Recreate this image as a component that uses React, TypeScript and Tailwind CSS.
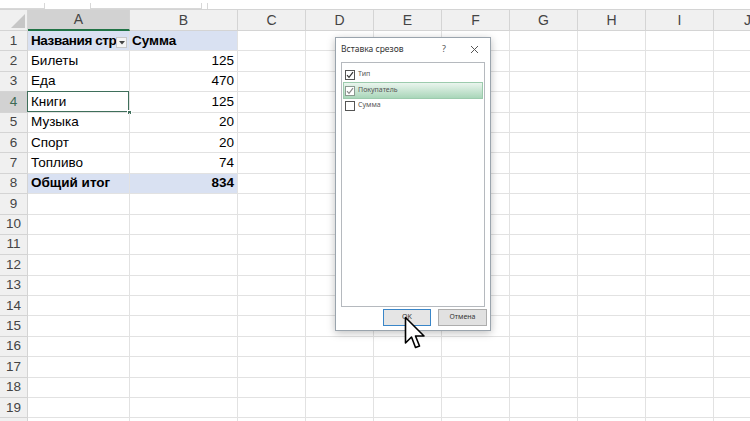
import React from "react";

const cols = [
  { l: "A", w: 102 },
  { l: "B", w: 108 },
  { l: "C", w: 68 },
  { l: "D", w: 68 },
  { l: "E", w: 68 },
  { l: "F", w: 68 },
  { l: "G", w: 68 },
  { l: "H", w: 68 },
  { l: "I", w: 68 },
  { l: "J", w: 68 },
];

type Row = { a?: string; b?: string; head?: boolean; total?: boolean };

const rows: Row[] = [
  { a: "Названия стр", b: "Сумма", head: true },
  { a: "Билеты", b: "125" },
  { a: "Еда", b: "470" },
  { a: "Книги", b: "125" },
  { a: "Музыка", b: "20" },
  { a: "Спорт", b: "20" },
  { a: "Топливо", b: "74" },
  { a: "Общий итог", b: "834", total: true },
];

const font = { fontFamily: '"Liberation Sans", Arial, sans-serif' };

function Check({ checked, muted }: { checked?: boolean; muted?: boolean }) {
  return (
    <span
      className={`flex h-[10px] w-[10px] items-center justify-center border bg-white ${
        muted ? "border-[#8a9a90]" : "border-[#555]"
      }`}
    >
      {checked && (
        <svg width="8" height="8" viewBox="0 0 8 8">
          <path d="M1 4.2 L3 6.3 L7 1.2" fill="none" stroke={muted ? "#888" : "#333"} strokeWidth="1.2" />
        </svg>
      )}
    </span>
  );
}

function Dialog() {
  return (
    <div
      className="absolute left-[335px] top-[37px] flex h-[294px] w-[156px] flex-col border border-[#9aa4ad] bg-white shadow-[0_2px_8px_rgba(0,0,0,0.25)]"
      style={{ fontFamily: '"Noto Sans", "Liberation Sans", sans-serif' }}
    >
      <div className="flex h-[22px] items-center px-[5px] text-[8.5px] text-[#333]">
        <span className="flex-1">Вставка срезов</span>
        <span className="mr-[24px] text-[9px] text-[#555]">?</span>
        <svg width="9" height="9" viewBox="0 0 9 9" className="mr-[6px]">
          <path d="M1 1 L8 8 M8 1 L1 8" stroke="#555" strokeWidth="1" />
        </svg>
      </div>
      <div className="mx-[5px] mt-[2px] h-[245px] border border-[#b5b9be] px-[1px] pt-[4px] text-[7px] text-[#555]">
        <div className="flex h-[15px] items-center gap-[3px] pl-[2px]">
          <Check checked />
          <span>Тип</span>
        </div>
        <div className="flex h-[17px] items-center gap-[3px] border border-[#9ccbad] bg-gradient-to-b from-[#eaf5ee] to-[#a9d6b9] pl-[1px]">
          <Check checked muted />
          <span>Покупатель</span>
        </div>
        <div className="flex h-[13px] items-center gap-[3px] pl-[2px]">
          <Check />
          <span>Сумма</span>
        </div>
      </div>
      <div className="mt-[2px] flex justify-end gap-[7px] pr-[3px] text-[7px] text-[#333]">
        <div className="flex h-[17px] w-[48px] items-center justify-center border border-[#3a86c8] bg-[#e5e5e5]">
          OK
        </div>
        <div className="flex h-[17px] w-[49px] items-center justify-center border border-[#adadad] bg-[#e1e1e1]">
          Отмена
        </div>
      </div>
    </div>
  );
}

function Cursor() {
  return (
    <svg
      className="absolute left-[404px] top-[316px]"
      width="24"
      height="34"
      viewBox="0 0 24 34"
    >
      <path
        d="M1.5 1.5 L1.5 27 L7.5 21 L11.5 31.5 L15.5 30 L11.5 20 L20 20 Z"
        fill="#fff"
        stroke="#000"
        strokeWidth="1.6"
        strokeLinejoin="round"
      />
    </svg>
  );
}

export default function App() {
  const allRows: Row[] = [...rows];
  while (allRows.length < 20) allRows.push({});

  return (
    <div className="relative h-[421px] w-[750px] overflow-hidden bg-white" style={font}>
      {/* formula bar remnants */}
      <div className="flex h-[10px] items-end gap-[5px] border-b border-[#d4d4d4] bg-white">
        <div className="h-[6px] w-[45px] border-r border-b border-[#d8d8d8]" />
        <div className="ml-[40px] h-[6px] w-[112px] border-x border-b border-[#d8d8d8]" />
        <div className="h-[6px] w-[450px] border-l border-[#d8d8d8]" />
      </div>

      {/* column header */}
      <div className="flex h-[21px] bg-[#f0f0f0] text-[14px] text-[#444]">
        <div className="relative w-[28px] shrink-0 border-r border-b border-[#d4d4d4]">
          <svg className="absolute bottom-[2px] right-[2px]" width="14" height="14" viewBox="0 0 14 14">
            <path d="M14 0 L14 14 L0 14 Z" fill="#c6c6c6" />
          </svg>
        </div>
        {cols.map((c) => (
          <div
            key={c.l}
            className={`flex shrink-0 items-center justify-center border-r border-[#d4d4d4] ${
              c.l === "A"
                ? "border-b-2 border-b-[#217346] bg-[#d2d2d2] text-[#444]"
                : "border-b border-b-[#d4d4d4]"
            }`}
            style={{ width: c.w }}
          >
            {c.l}
          </div>
        ))}
      </div>

      {/* rows */}
      {allRows.map((r, i) => {
        const fill = r.head || r.total ? "bg-[#d9e1f2]" : "";
        const bold = r.head || r.total ? "font-bold" : "";
        return (
          <div key={i} className="flex h-[20.4px] text-[13.5px] text-black">
            <div
              className={`flex w-[28px] shrink-0 items-center justify-center border-r border-b border-[#d4d4d4] text-[13.5px] ${
                i === 3 ? "bg-[#d2d2d2] text-[#3d6b55]" : "bg-[#f0f0f0] text-[#444]"
              }`}
            >
              {i < 19 ? i + 1 : ""}
            </div>
            <div
              className={`relative flex w-[102px] shrink-0 items-center overflow-visible border-r border-b border-[#e2e2e2] pl-[3px] ${fill} ${bold} ${
                r.head ? "tracking-[-0.4px]" : ""
              }`}
            >
              {r.a}
              {r.head && (
                <span className="absolute right-[2px] top-[6px] flex h-[11px] w-[11px] items-center justify-center border border-[#c8c8c8] bg-[#f4f4f4]">
                  <svg width="6" height="4" viewBox="0 0 6 4">
                    <path d="M0 0 L6 0 L3 3.5 Z" fill="#444" />
                  </svg>
                </span>
              )}
              {i === 3 && (
                <>
                  <span className="pointer-events-none absolute -left-[1px] -top-[1px] h-[calc(100%+1px)] w-[calc(100%+1px)] border-[1.5px] border-[#3f6f5b]" />
                  <span className="absolute -bottom-[3px] -right-[3px] h-[5px] w-[5px] border border-white bg-[#3f6f5b]" />
                </>
              )}
            </div>
            <div
              className={`flex w-[108px] shrink-0 items-center border-r border-b border-[#e2e2e2] pr-[3px] ${
                r.head ? "justify-start pl-[2px]" : "justify-end"
              } ${fill} ${bold}`}
            >
              {r.b}
            </div>
            {cols.slice(2).map((c) => (
              <div
                key={c.l}
                className="shrink-0 border-r border-b border-[#e2e2e2]"
                style={{ width: c.w }}
              />
            ))}
          </div>
        );
      })}

      <Dialog />
      <Cursor />
    </div>
  );
}
